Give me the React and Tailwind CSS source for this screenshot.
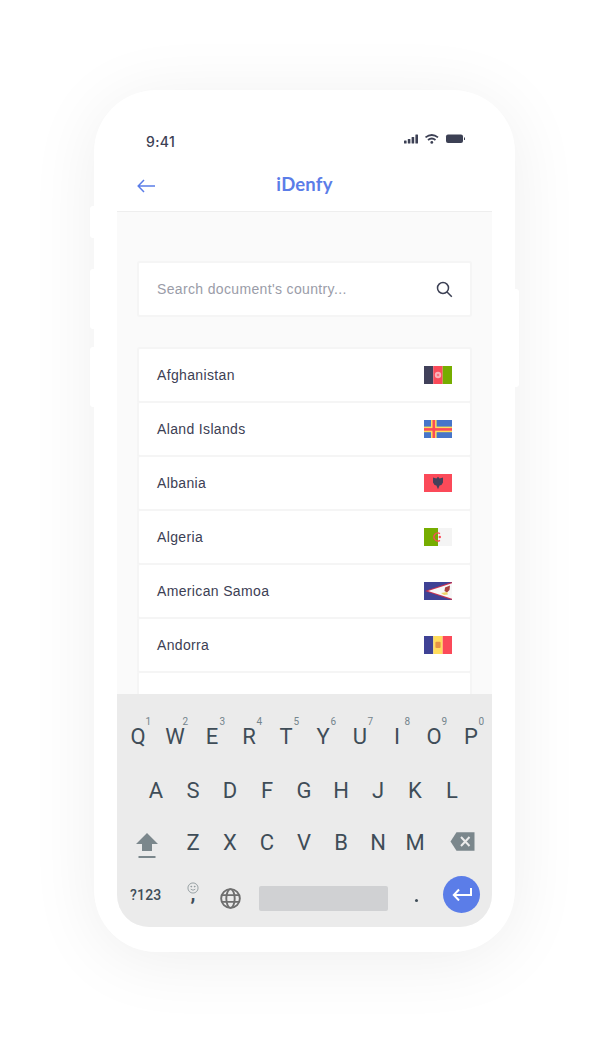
const sans = "font-['Liberation_Sans',sans-serif]";

function Afghanistan() {
  return (
    <svg width="28" height="18" viewBox="0 0 28 18">
      <rect width="9.3" height="18" fill="#41415a" />
      <rect x="9.3" width="9.4" height="18" fill="#fb4a59" />
      <rect x="18.7" width="9.3" height="18" fill="#76ad00" />
      <circle cx="14" cy="9" r="3.2" fill="#fbb4ba" />
      <circle cx="14" cy="9" r="1.3" fill="#fb7480" />
    </svg>
  );
}
function Aland() {
  return (
    <svg width="28" height="18" viewBox="0 0 28 18">
      <rect width="28" height="18" fill="#4775c9" />
      <rect x="7" width="5.6" height="18" fill="#ffdc5c" />
      <rect y="6.6" width="28" height="5.6" fill="#ffdc5c" />
      <rect x="8.5" width="2.6" height="18" fill="#fb4a59" />
      <rect y="8.1" width="28" height="2.6" fill="#fb4a59" />
    </svg>
  );
}
function Albania() {
  return (
    <svg width="28" height="18" viewBox="0 0 28 18">
      <rect width="28" height="18" fill="#fb4a59" />
      <path d="M14 2.8 L15.6 4.4 L19 3.4 L19 8.5 L17.4 11 L15.6 11.6 L14 15.2 L12.4 11.6 L10.6 11 L9 8.5 L9 3.4 L12.4 4.4Z" fill="#45405a" />
    </svg>
  );
}
function Algeria() {
  return (
    <svg width="28" height="18" viewBox="0 0 28 18">
      <rect width="14" height="18" fill="#76ad00" />
      <rect x="14" width="14" height="18" fill="#f4f4f4" />
      <path d="M16 5.6 A4 4 0 1 0 16 12.4" fill="none" stroke="#fb4a59" strokeWidth="1.3" />
      <circle cx="15.8" cy="9" r="1.2" fill="#fb4a59" />
    </svg>
  );
}
function Samoa() {
  return (
    <svg width="28" height="18" viewBox="0 0 28 18">
      <rect width="28" height="18" fill="#3f4295" />
      <path d="M28 0 L1 9 L28 18Z" fill="#c9304f" />
      <path d="M28 1.3 L4 9 L28 16.7Z" fill="#f7f7f7" />
      <path d="M21 5.5 L26 3.5 L25.5 8 L23 10.5 L20.5 9Z" fill="#a9413f" />
      <path d="M17 11 L23 10 L24 12.5 L20 13Z" fill="#f0d36a" />
    </svg>
  );
}
function Andorra() {
  return (
    <svg width="28" height="18" viewBox="0 0 28 18">
      <rect width="9.3" height="18" fill="#3f4295" />
      <rect x="9.3" width="9.4" height="18" fill="#ffdc5c" />
      <rect x="18.7" width="9.3" height="18" fill="#fb4a59" />
      <rect x="11.4" y="5.8" width="5.2" height="6.2" rx="1" fill="#e59345" />
    </svg>
  );
}

function Row({ name, Flag }) {
  return (
    <div className="h-[56px] -mb-[2px] flex items-center justify-between pl-[18px] pr-[18px] bg-white border-2 border-[#f5f5f5] rounded-[3px]">
      <span className="text-[14px] tracking-[0.35px] text-[#3c4054]">{name}</span>
      <Flag />
    </div>
  );
}

function Key({ children, sup }) {
  return (
    <div className="relative w-[37px] flex justify-center text-[22px] leading-[26px] text-[#3f4d58] font-['Roboto',sans-serif]">
      {children}
      {sup && (
        <span className="absolute left-[26px] -top-[8px] text-[10px] leading-[12px] text-[#73848c]">{sup}</span>
      )}
    </div>
  );
}

const topRow = [["Q","1"],["W","2"],["E","3"],["R","4"],["T","5"],["Y","6"],["U","7"],["I","8"],["O","9"],["P","0"]];

export default function App() {
  return (
    <div className={`w-[609px] h-[1042px] bg-white pt-[90px] pl-[94px] overflow-hidden ${sans}`}>
      <div className="relative w-[421px] h-[862px]">
        <div className="relative w-full h-full bg-white rounded-[62px] shadow-[0_8px_70px_rgba(0,0,0,0.07)] pt-[23px] px-[23px]">
          <div className="w-[375px] h-[814px] flex flex-col rounded-b-[32px] overflow-hidden">
            {/* status */}
            <div className="h-[52px] pl-[29px] pr-[26px] flex justify-between items-start pt-[20px] shrink-0">
              <span className="text-[14px] leading-[17px] tracking-[0.4px] text-[#3c4054] font-['Inter',sans-serif] font-medium">9:41</span>
              <svg width="62" height="12" viewBox="0 0 62 12" className="mt-[1px]">
                <rect x="0" y="6.5" width="2.6" height="3" rx="0.5" fill="#3c4054" />
                <rect x="3.8" y="5" width="2.6" height="4.5" rx="0.5" fill="#3c4054" />
                <rect x="7.6" y="3" width="2.6" height="6.5" rx="0.5" fill="#3c4054" />
                <rect x="11.4" y="0.5" width="2.6" height="9" rx="0.5" fill="#3c4054" />
                <path d="M21.5 3.4 Q27.8 -1.4 34 3.4" fill="none" stroke="#3c4054" strokeWidth="1.8" />
                <path d="M24 6 Q27.8 3 31.5 6" fill="none" stroke="#3c4054" strokeWidth="1.8" />
                <circle cx="27.8" cy="8.4" r="1.4" fill="#3c4054" />
                <rect x="42" y="0.5" width="17" height="8.5" rx="2" fill="#3c4054" />
                <rect x="60" y="3.5" width="1" height="2.5" fill="#3c4054" />
              </svg>
            </div>
            {/* header */}
            <div className="relative h-[47px] shrink-0 border-b border-[#eeeeee] flex items-center justify-center bg-white">
              <svg className="absolute left-[20px] top-[14px]" width="18" height="14" viewBox="0 0 18 14" fill="none" stroke="#5b7de8" strokeWidth="1.5">
                <path d="M18 7 H1.2 M7 1 L1.2 7 L7 13" />
              </svg>
              <span className="text-[18.5px] leading-[24px] -mt-[8px] font-['Lato',sans-serif] font-bold text-[#5b7de8] tracking-[0.2px]">iDenfy</span>
            </div>
            {/* body */}
            <div className="relative flex-1 bg-[#fafafa] px-[20px] pt-[49px] overflow-hidden">
              <div className="h-[56px] flex items-center justify-between pl-[18px] pr-[17px] bg-white border-2 border-[#f5f5f5] rounded-[3px]">
                <span className="text-[14px] tracking-[0.35px] text-[#9a9ca8]">Search document's country...</span>
                <svg width="17" height="17" viewBox="0 0 17 17" fill="none" stroke="#3c4054" strokeWidth="1.5">
                  <circle cx="7" cy="7" r="5.5" />
                  <path d="M11 11 L15.8 15.8" />
                </svg>
              </div>
              <div className="mt-[30px]">
                <Row name="Afghanistan" Flag={Afghanistan} />
                <Row name="Aland Islands" Flag={Aland} />
                <Row name="Albania" Flag={Albania} />
                <Row name="Algeria" Flag={Algeria} />
                <Row name="American Samoa" Flag={Samoa} />
                <Row name="Andorra" Flag={Andorra} />
                <div className="h-[56px] bg-white border-2 border-[#f5f5f5] rounded-[3px]" />
              </div>
              {/* keyboard */}
              <div className="absolute left-0 right-0 bottom-0 h-[233px] bg-[#ebebeb] pt-[30px]">
                <div className="flex pl-[2.5px]">
                  {topRow.map(([k, s]) => <Key key={k} sup={s}>{k}</Key>)}
                </div>
                <div className="flex pl-[20.5px] mt-[28px]">
                  {"ASDFGHJKL".split("").map((k) => <Key key={k}>{k}</Key>)}
                </div>
                <div className="flex items-center mt-[26px] pl-[19px]">
                  <svg width="22" height="25" viewBox="0 0 22 25" className="mr-[16.5px] relative top-[2px]">
                    <path d="M11 0 L22 11 H16 V18 H6 V11 H0Z" fill="#7b878c" />
                    <rect x="2.5" y="23" width="17" height="2" fill="#7b878c" />
                  </svg>
                  {"ZXCVBNM".split("").map((k) => <Key key={k}>{k}</Key>)}
                  <svg width="25" height="19" viewBox="0 0 25 19" className="ml-[16.5px] relative -top-[2px]">
                    <path d="M6.5 0.3 H24.5 V18.7 H6.5 L0.5 9.5Z" fill="#7b878c" />
                    <path d="M11 5 L19.5 14 M19.5 5 L11 14" stroke="#ebebeb" strokeWidth="2" />
                  </svg>
                </div>
                <div className="relative mt-[20px] h-[40px]">
                  <span className="absolute left-[13px] top-[10px] text-[14px] leading-[18px] text-[#3f4d58] font-medium font-['Roboto',sans-serif] tracking-[0.2px]">?123</span>
                  <svg className="absolute left-[70px] top-[6px]" width="12" height="12" viewBox="0 0 13 13" fill="none" stroke="#7b878c" strokeWidth="0.8">
                    <circle cx="6.5" cy="6.5" r="5.5" />
                    <path d="M4 7.8 Q6.5 10 9 7.8" />
                    <circle cx="4.6" cy="5" r="0.5" fill="#7b878c" />
                    <circle cx="8.4" cy="5" r="0.5" fill="#7b878c" />
                  </svg>
                  <span className="absolute left-[73.5px] top-[5px] text-[20px] leading-[24px] font-bold text-[#3f4d58] font-['Roboto',sans-serif]">,</span>
                  <svg className="absolute left-[103px] top-[12px]" width="21" height="21" viewBox="0 0 22 22" fill="none" stroke="#6f6f6f" strokeWidth="2">
                    <circle cx="11" cy="11" r="9.8" />
                    <ellipse cx="11" cy="11" rx="4.4" ry="9.8" />
                    <path d="M2 7.5 H20 M2 14.5 H20" />
                  </svg>
                  <div className="absolute left-[142px] top-[10px] w-[129px] h-[25px] bg-[#d0d1d3] rounded-[2px]" />
                  <span className="absolute left-[298px] top-[23px] w-[3px] h-[3px] bg-[#3f4d58] rounded-full" />
                  <div className="absolute left-[326px] top-[0px] w-[37px] h-[37px] bg-[#5b7de8] rounded-full flex items-center justify-center">
                    <svg width="20" height="13" viewBox="0 0 20 13" fill="none" stroke="#ffffff" strokeWidth="2">
                      <path d="M19 0 V7 H2 M7 1.5 L1.8 7 L7 12.5" />
                    </svg>
                  </div>
                </div>
              </div>
            </div>
          </div>
        </div>
        <div className="absolute -left-[4px] top-[116px] w-[6px] h-[32px] bg-white rounded-[3px]" />
        <div className="absolute -left-[4px] top-[179px] w-[6px] h-[60px] bg-white rounded-[3px]" />
        <div className="absolute -left-[4px] top-[257px] w-[6px] h-[60px] bg-white rounded-[3px]" />
        <div className="absolute -right-[4px] top-[199px] w-[6px] h-[98px] bg-white rounded-[3px]" />
      </div>
    </div>
  );
}
